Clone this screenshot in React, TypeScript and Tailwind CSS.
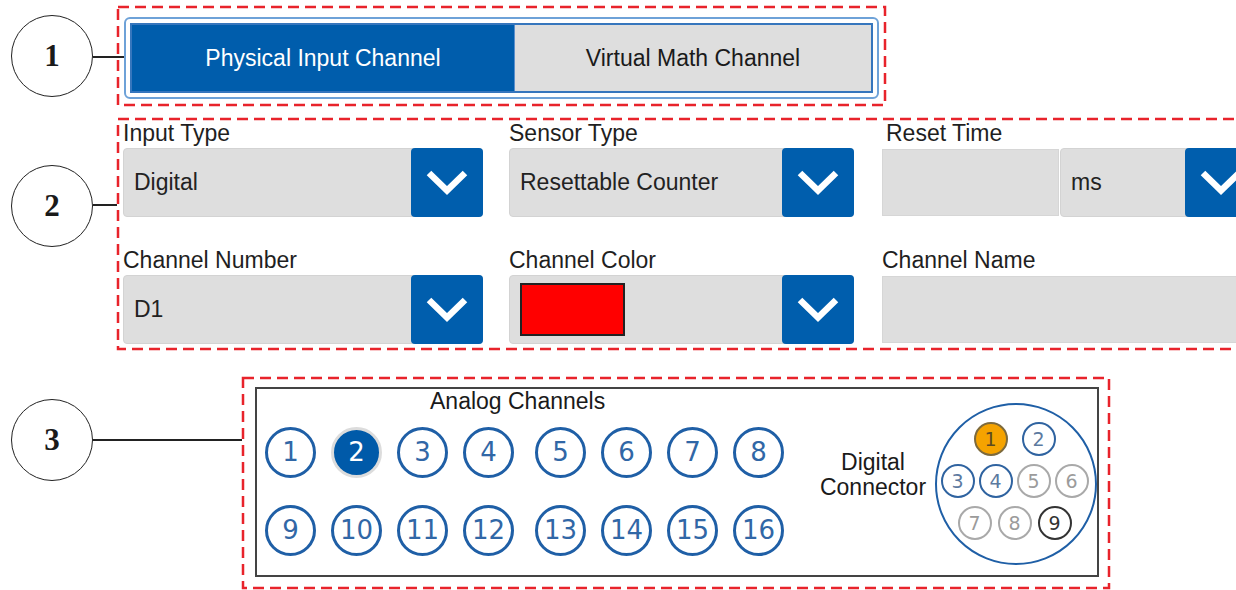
import React from 'react';

// red dashed annotation frame drawn over a box
function DashFrame() {
  return (
    <svg className="absolute inset-[1px] w-[calc(100%-2px)] h-[calc(100%-2px)] overflow-visible pointer-events-none">
      <rect x="0" y="0" width="100%" height="100%" fill="none" stroke="#e8232b" strokeWidth="2.5" strokeDasharray="11 6" />
    </svg>
  );
}

function Callout({ n }: { n: number }) {
  return (
    <div className="w-[82px] h-[82px] shrink-0 rounded-full border-[1.5px] border-[#222] bg-white flex items-center justify-center font-['Liberation_Serif',serif] font-bold text-[31px] text-[#1a1a1a]">
      {n}
    </div>
  );
}

function Chevron() {
  return (
    <svg width="44" height="28" viewBox="0 0 44 28" fill="none">
      <polyline points="4,4 22,21.5 40,4" stroke="#fff" strokeWidth="6.5" strokeLinejoin="miter" />
    </svg>
  );
}

function Label({ children }: { children: React.ReactNode }) {
  return <div className="h-[28px] leading-[26px] text-[23px] text-[#1f1f1f] whitespace-nowrap">{children}</div>;
}

function Dropdown({ children, width }: { children?: React.ReactNode; width: string }) {
  return (
    <div className={`flex h-[69px] rounded-[4px] bg-[#dedede] border border-[#d3d3d3] ${width}`}>
      <div className="flex-1 flex items-center pl-[10px] text-[23px] text-[#222] whitespace-nowrap">{children}</div>
      <div className="w-[72px] -my-px -mr-px rounded-[4px] bg-[#005ead] flex items-center justify-center">
        <Chevron />
      </div>
    </div>
  );
}

function AnalogPin({ n, active, extra }: { n: number; active?: boolean; extra?: boolean }) {
  return (
    <div
      className={`w-[51px] h-[51px] shrink-0 rounded-full border-[3px] flex items-center justify-center font-['DejaVu_Sans',sans-serif] text-[26px] ${
        active ? 'bg-[#005aa9] border-[#dcdcdc] text-white' : 'border-[#1f5fa6] text-[#3167a6]'
      } ${extra ? 'ml-[6px]' : ''}`}
    >
      {n}
    </div>
  );
}

type PinTone = 'orange' | 'blue' | 'gray' | 'dark';

function ConnectorPin({ n, tone }: { n: number; tone: PinTone }) {
  const tones: Record<PinTone, string> = {
    orange: 'bg-[#f5a300] border-[#7d6a3c] text-[#5c4a22]',
    blue: 'border-[#2f63a0] text-[#5c7aa0]',
    gray: 'border-[#a9a9a9] text-[#9b9b9b]',
    dark: 'border-[#333] text-[#333]',
  };
  return (
    <div className={`w-[34px] h-[34px] rounded-full border-[2.5px] flex items-center justify-center font-['DejaVu_Sans',sans-serif] text-[19px] ${tones[tone]}`}>
      {n}
    </div>
  );
}

export default function App() {
  const row1 = [1, 2, 3, 4, 5, 6, 7, 8];
  const row2 = [9, 10, 11, 12, 13, 14, 15, 16];

  return (
    <div className="w-[1236px] h-[590px] overflow-hidden bg-white pt-[6px] font-['Liberation_Sans',Arial,sans-serif]">
      {/* 1 - channel kind toggle */}
      <div className="flex items-start">
        <div className="ml-[11px] mt-[9px]">
          <Callout n={1} />
        </div>
        <div className="mt-[50px] h-[2px] w-[31px] -mr-[7px] bg-[#222] shrink-0" />
        <div className="relative w-[769px] h-[100px] shrink-0 pt-[11px] pl-[7px]">
          <div className="w-[755px] h-[82px] rounded-[6px] border-2 border-[#6ea2d8] p-[4px]">
            <div className="flex h-[70px] border-2 border-[#3676bd]">
              <div className="w-[382px] bg-[#005dac] flex items-center justify-center text-[23px] text-white">
                Physical Input Channel
              </div>
              <div className="flex-1 bg-[#dedede] border-l border-[#5a8fcc] flex items-center justify-center text-[23px] text-[#1a1a1a]">
                Virtual Math Channel
              </div>
            </div>
          </div>
          <DashFrame />
        </div>
      </div>

      {/* 2 - channel fields */}
      <div className="flex items-start mt-[12px]">
        <div className="ml-[11px] mt-[47px]">
          <Callout n={2} />
        </div>
        <div className="mt-[86px] h-[2px] w-[24px] bg-[#222] shrink-0" />
        <div className="relative w-[1200px] shrink-0 pl-[6px] pt-[2px] pb-[6px]">
          <div className="grid grid-cols-[360px_347px_1fr] gap-x-[26px] gap-y-[30px]">
            <div>
              <Label>Input Type</Label>
              <Dropdown width="w-[360px]">Digital</Dropdown>
            </div>
            <div>
              <Label>Sensor Type</Label>
              <Dropdown width="w-[345px]">Resettable Counter</Dropdown>
            </div>
            <div>
              <div className="pl-[4px]">
                <Label>Reset Time</Label>
              </div>
              <div className="flex gap-[1px]">
                <div className="w-[177px] h-[67px] mt-px bg-[#dedede] border border-[#d6d6d6]" />
                <Dropdown width="w-[197px]">ms</Dropdown>
              </div>
            </div>
            <div>
              <Label>Channel Number</Label>
              <Dropdown width="w-[360px]">D1</Dropdown>
            </div>
            <div>
              <Label>Channel Color</Label>
              <Dropdown width="w-[345px]">
                <div className="w-[105px] h-[53px] bg-[#ff0000] border-2 border-[#222]" />
              </Dropdown>
            </div>
            <div>
              <Label>Channel Name</Label>
              <div className="h-[67px] mt-px bg-[#dedede] border border-[#d6d6d6]" />
            </div>
          </div>
          <DashFrame />
        </div>
      </div>

      {/* 3 - channel map */}
      <div className="flex items-start mt-[27px]">
        <div className="ml-[11px] mt-[22px]">
          <Callout n={3} />
        </div>
        <div className="mt-[62px] h-[2px] w-[149px] bg-[#222] shrink-0" />
        <div className="relative w-[868px] h-[212px] shrink-0 pt-[10px] pl-[13px]">
          <div className="w-[844px] h-[190px] border-2 border-[#444] flex items-start pl-[8px]">
            <div>
              <div className="ml-[165px] leading-[24px] text-[23px] text-[#1a1a1a]">Analog Channels</div>
              <div className="mt-[14px] flex gap-[15px]">
                {row1.map((n, i) => (
                  <AnalogPin key={n} n={n} active={n === 2} extra={i === 4} />
                ))}
              </div>
              <div className="mt-[27px] flex gap-[15px]">
                {row2.map((n, i) => (
                  <AnalogPin key={n} n={n} extra={i === 4} />
                ))}
              </div>
            </div>
            <div className="ml-[32px] mt-[61px] w-[114px] text-center text-[23px] leading-[25px] text-[#1a1a1a]">
              Digital
              <br />
              Connector
            </div>
            <div className="ml-[5px] mt-[14px] w-[162px] h-[162px] rounded-full border-[2.5px] border-[#1f5fa6] flex flex-col items-center justify-center gap-[8px] pb-[6px] pr-[3px]">
              <div className="flex gap-[14px]">
                <ConnectorPin n={1} tone="orange" />
                <ConnectorPin n={2} tone="blue" />
              </div>
              <div className="flex gap-[4px]">
                <ConnectorPin n={3} tone="blue" />
                <ConnectorPin n={4} tone="blue" />
                <ConnectorPin n={5} tone="gray" />
                <ConnectorPin n={6} tone="gray" />
              </div>
              <div className="flex gap-[6px]">
                <ConnectorPin n={7} tone="gray" />
                <ConnectorPin n={8} tone="gray" />
                <ConnectorPin n={9} tone="dark" />
              </div>
            </div>
          </div>
          <DashFrame />
        </div>
      </div>
    </div>
  );
}
